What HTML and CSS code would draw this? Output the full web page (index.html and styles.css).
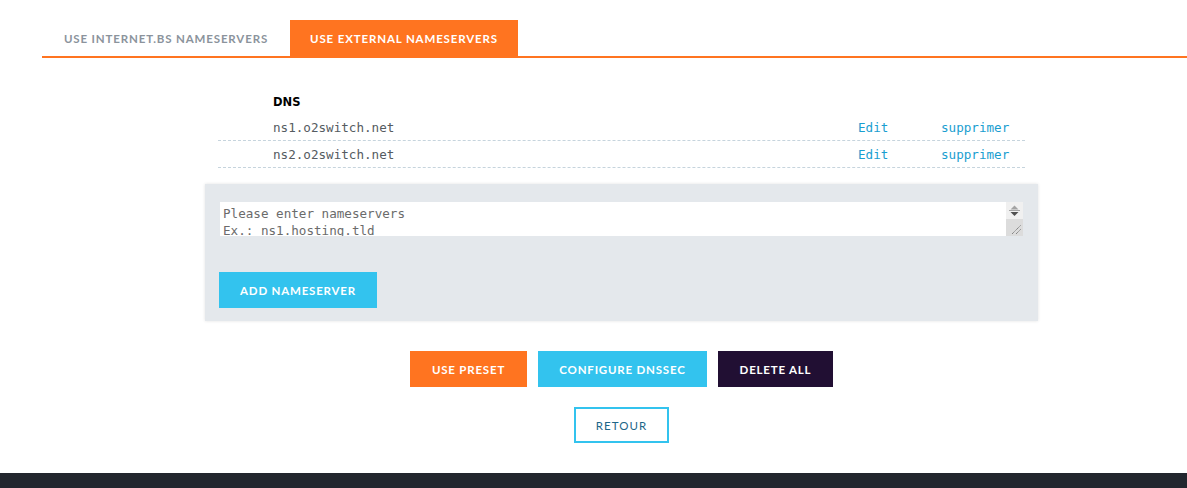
FILE: index.html
```html
<!DOCTYPE html>
<html lang="fr">
<head>
    <meta charset="UTF-8">
    <meta name="viewport" content="width=device-width, initial-scale=1.0">
    <title>Nameservers</title>
    <link rel="stylesheet" href="styles.css">
</head>
<body>
    <div class="page">
        <ul class="tabs">
            <li class="tab">Use Internet.bs nameservers</li>
            <li class="tab tab-active">Use external nameservers</li>
        </ul>

        <div class="ns-table">
            <div class="ns-row ns-head">
                <span></span>
                <span class="ns-title">DNS</span>
                <span></span>
                <span></span>
            </div>
            <div class="ns-row">
                <span></span>
                <span class="ns-name">ns1.o2switch.net</span>
                <a href="#" class="ns-link">Edit</a>
                <a href="#" class="ns-link">supprimer</a>
            </div>
            <div class="ns-row">
                <span></span>
                <span class="ns-name">ns2.o2switch.net</span>
                <a href="#" class="ns-link">Edit</a>
                <a href="#" class="ns-link">supprimer</a>
            </div>
        </div>

        <div class="add-panel">
            <div class="input-wrap">
                <textarea class="ns-input" placeholder="Please enter nameservers&#10;Ex.: ns1.hosting.tld"></textarea>
                <!-- scroll arrows + resize grip of the textarea -->
                <div class="scroller">
                    <svg class="scroller-arrows" width="17" height="17" viewBox="0 0 17 17">
                        <path d="M4.5 7.5 L8.5 3.5 L12.5 7.5 Z" fill="#a3a3a3"/>
                        <rect x="3" y="8" width="11" height="1" fill="#a3a3a3"/>
                        <path d="M4.5 10 L12.5 10 L8.5 14 Z" fill="#505050"/>
                    </svg>
                    <svg class="scroller-grip" width="17" height="17" viewBox="0 0 17 17">
                        <path d="M6 15 L15 6 M10 15 L15 10" stroke="#777" stroke-width="1" stroke-dasharray="1.2 0.6"/>
                    </svg>
                </div>
            </div>
            <button class="btn btn-cyan btn-add">Add nameserver</button>
        </div>

        <div class="actions">
            <button class="btn btn-orange">Use preset</button>
            <button class="btn btn-cyan">Configure DNSSEC</button>
            <button class="btn btn-dark">Delete all</button>
        </div>

        <div class="back">
            <button class="btn btn-outline">Retour</button>
        </div>
    </div>
    <footer class="footer"></footer>
</body>
</html>
```

FILE: styles.css
```css
:root {
    --orange: #ff7420;
    --cyan: #33c3ee;
    --dark: #210f33;
    --panel: #e4e8ec;
    --mono: 'DejaVu Sans Mono', monospace;
    --btn-font: 'Lato', 'Open Sans', sans-serif;
}
html, body {
    margin: 0;
    padding: 0;
    overflow: hidden;
    background: #fff;
}
body {
    width: 1187px;
    height: 488px;
    position: relative;
}
.page {
    margin-left: 42px;
    width: 1159px;
    padding-top: 20px;
}

/* tabs */
.tabs {
    display: flex;
    list-style: none;
    margin: 0;
    padding: 0;
    border-bottom: 2px solid var(--orange);
}
.tab {
    height: 36px;
    display: flex;
    align-items: center;
    justify-content: center;
    font-family: var(--btn-font);
    font-weight: 700;
    font-size: 11.5px;
    letter-spacing: 0.85px;
    text-transform: uppercase;
    color: #8b939c;
    width: 248px;
}
.tab-active {
    width: 228px;
    background: var(--orange);
    color: #fff;
}

/* nameserver list */
.ns-table {
    width: 807px;
    margin: 31px auto 0;
}
.ns-row {
    display: grid;
    grid-template-columns: 55px 1fr 83px 84px;
    height: 26px;
    align-items: center;
    border-bottom: 1px dashed #c6d4dd;
    font-family: var(--mono);
    font-size: 12.6px;
}
.ns-head {
    height: 25px;
    border-bottom: none;
}
.ns-title {
    font-family: 'DejaVu Sans', sans-serif;
    font-weight: bold;
    font-size: 11.5px;
    color: #000;
}
.ns-name {
    color: #555b61;
}
.ns-link {
    color: #1a9ed0;
    text-decoration: none;
}

/* add box */
.add-panel {
    width: 833px;
    margin: 16px auto 0;
    box-sizing: border-box;
    padding: 18px 15px 13px 14px;
    background: var(--panel);
    box-shadow: 0 0 3px rgba(0, 0, 0, 0.12);
}
.input-wrap {
    position: relative;
    width: 803px;
    height: 34px;
    margin: 0 0 36px 1px;
}
.ns-input {
    display: block;
    box-sizing: border-box;
    width: 100%;
    height: 100%;
    margin: 0;
    padding: 3px 20px 0 3px;
    border: none;
    background: #fff;
    font-family: var(--mono);
    font-size: 12.6px;
    line-height: 17px;
    color: #555;
    overflow: hidden;
    resize: none;
}
.ns-input::placeholder {
    color: #6b6b6b;
}
.scroller {
    position: absolute;
    top: 0;
    right: 0;
    width: 17px;
    height: 34px;
    display: flex;
    flex-direction: column;
}
.scroller svg {
    display: block;
}
.scroller-arrows {
    background: #f0f0f0;
}
.scroller-grip {
    background: #dcdcdc;
}

/* buttons */
.btn {
    height: 36px;
    border: none;
    padding: 0;
    font-family: var(--btn-font);
    font-weight: 700;
    font-size: 11.5px;
    letter-spacing: 0.8px;
    text-transform: uppercase;
    color: #fff;
    cursor: pointer;
}
.btn-add {
    width: 158px;
}
.btn-cyan {
    background: var(--cyan);
}
.btn-orange {
    background: var(--orange);
}
.btn-dark {
    background: var(--dark);
}
.actions {
    display: flex;
    justify-content: center;
    gap: 11px;
    margin-top: 30px;
}
.actions .btn-orange { width: 117px; }
.actions .btn-cyan { width: 169px; }
.actions .btn-dark { width: 115px; }
.back {
    display: flex;
    justify-content: center;
    margin-top: 20px;
}
.btn-outline {
    width: 95px;
    background: #fff;
    border: 2px solid var(--cyan);
    color: #1d6688;
    font-weight: 400;
    letter-spacing: 1.1px;
}

.footer {
    position: absolute;
    left: 0;
    right: 0;
    top: 473px;
    bottom: 0;
    background: #22262e;
}
```
